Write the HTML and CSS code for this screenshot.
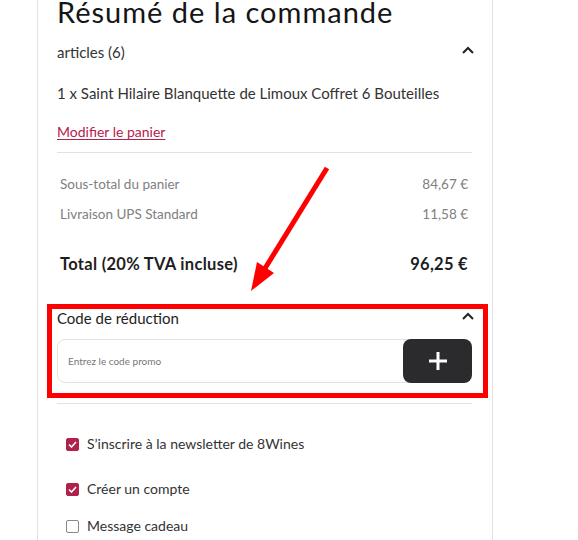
FILE: index.html
```html
<!DOCTYPE html>
<html lang="fr">
<head>
    <meta charset="UTF-8">
    <meta name="viewport" content="width=device-width, initial-scale=1.0">
    <title>Résumé de la commande</title>
    <link rel="stylesheet" href="styles.css">
</head>
<body>
    <div class="card">
        <h1>Résumé de la commande</h1>

        <div class="toggle articles">
            <span>articles (6)</span>
            <svg class="chev" width="12" height="8" viewBox="0 0 12 8"><path d="M1 7 L6 2 L11 7" fill="none" stroke="#222" stroke-width="2"/></svg>
        </div>
        <div class="product">1 x Saint Hilaire Blanquette de Limoux Coffret 6 Bouteilles</div>
        <a class="edit" href="#">Modifier le panier</a>

        <div class="totals">
            <div class="row"><span>Sous-total du panier</span><span>84,67 €</span></div>
            <div class="row"><span>Livraison UPS Standard</span><span>11,58 €</span></div>
            <div class="row total"><span>Total (20% TVA incluse)</span><span>96,25 €</span></div>
        </div>

        <div class="coupon">
            <div class="toggle">
                <span>Code de réduction</span>
                <svg class="chev" width="12" height="8" viewBox="0 0 12 8"><path d="M1 7 L6 2 L11 7" fill="none" stroke="#222" stroke-width="2"/></svg>
            </div>
            <div class="promo">
                <input type="text" placeholder="Entrez le code promo">
                <button type="button" aria-label="Ajouter">
                    <svg width="20" height="20" viewBox="0 0 20 20"><path d="M10 1 V19 M1 10 H19" stroke="#fff" stroke-width="3"/></svg>
                </button>
            </div>
        </div>

        <div class="options">
            <label class="check first"><span class="box on"><svg width="9" height="7" viewBox="0 0 9 7"><path d="M1 3.5 L3.5 6 L8 1" fill="none" stroke="#fff" stroke-width="1.6"/></svg></span>S’inscrire à la newsletter de 8Wines</label>
            <label class="check second"><span class="box on"><svg width="9" height="7" viewBox="0 0 9 7"><path d="M1 3.5 L3.5 6 L8 1" fill="none" stroke="#fff" stroke-width="1.6"/></svg></span>Créer un compte</label>
            <label class="check third"><span class="box"></span>Message cadeau</label>
        </div>
    </div>

    <!-- annotation -->
    <div class="mark"></div>
    <svg class="arrow" width="578" height="540" viewBox="0 0 578 540">
        <path d="M327 168 L264 270" stroke="#ff0000" stroke-width="5"/>
        <polygon points="251,291 257,262 274,273" fill="#ff0000"/>
    </svg>
</body>
</html>
```

FILE: styles.css
```css
body {
    font-family: 'Lato', 'Liberation Sans', sans-serif;
    background-color: #fff;
    color: #333;
    margin: 0;
    padding: 0;
    overflow: hidden;
}
.card {
    width: 456px;
    box-sizing: border-box;
    margin: -6px 0 0 37px;
    padding: 0 20px 40px 19px;
    border: 1px solid #e2e2e2;
    border-top: 0;
}
h1 {
    margin: 0;
    font-size: 29px;
    line-height: 36px;
    font-weight: 400;
    letter-spacing: 1px;
    color: #151515;
}
.toggle {
    display: flex;
    justify-content: space-between;
    align-items: center;
    font-size: 15px;
    line-height: 24px;
    color: #222;
}
.toggle .chev {
    margin-right: -2px;
    margin-top: -4px;
}
.articles {
    margin-top: 10px;
    color: #333;
}
.product {
    margin-top: 17px;
    font-size: 15px;
    line-height: 24px;
    color: #333;
}
.edit {
    display: block;
    margin-top: 17px;
    font-size: 14px;
    line-height: 20px;
    color: #b5214a;
    text-decoration: underline;
    text-underline-offset: 2px;
}
.totals {
    margin-top: 10px;
    border-top: 1px solid #e2e2e2;
    padding: 21px 4px 0 3px;
}
.row {
    display: flex;
    justify-content: space-between;
    font-size: 13.5px;
    line-height: 20px;
    color: #808080;
    margin-bottom: 10px;
}
.row.total {
    margin-top: 30px;
    margin-bottom: 0;
    font-size: 16.5px;
    font-weight: 700;
    letter-spacing: 0.3px;
    color: #1e1e1e;
}
.coupon {
    margin-top: 32px;
}
.promo {
    display: flex;
    margin-top: 9px;
    height: 44px;
}
.promo input {
    flex: 1;
    margin-right: -14px;
    border: 1px solid #e2e2e2;
    border-radius: 8px;
    padding: 0 10px;
    font-family: inherit;
    font-size: 10px;
    outline: none;
}
.promo input::placeholder {
    color: #777;
}
.promo button {
    position: relative;
    width: 69px;
    border: 0;
    border-radius: 8px;
    background: #2b2b2d;
    display: flex;
    align-items: center;
    justify-content: center;
}
.options {
    margin-top: 20px;
    border-top: 1px solid #e2e2e2;
    padding: 0 0 0 9px;
}
.check {
    display: flex;
    align-items: center;
    gap: 8px;
    font-size: 14px;
    line-height: 20px;
    color: #333;
}
.check.first { margin-top: 30px; }
.check.second { margin-top: 25px; }
.check.third { margin-top: 17px; }
.box {
    width: 13px;
    height: 13px;
    box-sizing: border-box;
    border: 1px solid #888;
    border-radius: 2px;
    display: flex;
    align-items: center;
    justify-content: center;
}
.box.on {
    background: #b0224b;
    border-color: #b0224b;
}
.mark {
    position: absolute;
    left: 47px;
    top: 304px;
    width: 441px;
    height: 94px;
    box-sizing: border-box;
    border: 5px solid #ff0000;
}
.arrow {
    position: absolute;
    left: 0;
    top: 0;
    pointer-events: none;
}
```
